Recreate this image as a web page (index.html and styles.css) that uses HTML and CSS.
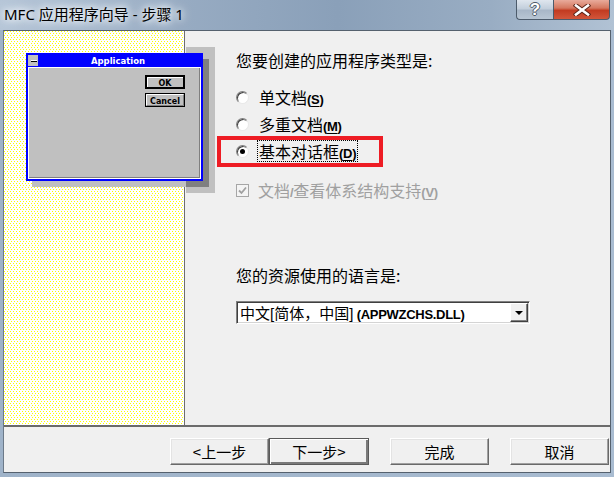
FILE: index.html
```html
<!DOCTYPE html>
<html lang="zh-CN">
<head>
    <meta charset="UTF-8">
    <title>MFC 应用程序向导 - 步骤 1</title>
    <link rel="stylesheet" href="styles.css">
</head>
<body>
    <div class="window">
        <div class="titlebar">
            <span class="title">MFC 应用程序向导 - 步骤 1</span>
            <div class="caption-btns">
                <span class="cap-btn help">?</span>
                <span class="cap-btn close">
                    <svg width="18" height="12" viewBox="0 0 18 12">
                        <path d="M3 1.5 L15 10.5 M15 1.5 L3 10.5" stroke="#5b2418" stroke-width="4.5" stroke-linecap="square"/>
                        <path d="M3 1.5 L15 10.5 M15 1.5 L3 10.5" stroke="#fff" stroke-width="2.6" stroke-linecap="square"/>
                    </svg>
                </span>
            </div>
        </div>

        <div class="client">
            <div class="main">
                <div class="preview">
                    <svg class="dots" width="180" height="394">
                        <defs>
                            <pattern id="dot" width="6" height="4" patternUnits="userSpaceOnUse">
                                <rect x="0" y="0" width="1" height="1" fill="#ffff00"/>
                                <rect x="3" y="0" width="1" height="1" fill="#ffff00"/>
                                <rect x="1" y="2" width="1" height="1" fill="#ffff00"/>
                                <rect x="4" y="2" width="1" height="1" fill="#ffff00"/>
                            </pattern>
                        </defs>
                        <rect width="180" height="394" fill="url(#dot)"/>
                    </svg>
                    <svg class="preview-art" width="200" height="152" viewBox="0 0 200 152">
                        <rect x="166" y="3" width="29" height="146" fill="#c0c0c0"/>
                        <rect x="12" y="137" width="154" height="6" fill="#c0c0c0"/>
                        <rect x="183" y="15" width="6" height="128" fill="#808080"/>
                        <rect x="166" y="137" width="23" height="6" fill="#808080"/>
                        <rect x="6" y="9" width="177" height="128" fill="#0000ff"/>
                        <rect x="8" y="23" width="173" height="112" fill="#fff"/>
                        <rect x="9" y="24" width="171" height="110" fill="#c0c0c0"/>
                        <path d="M9 133.5H180 M179.5 24V134" fill="none" stroke="#808080"/>
                        <rect x="8" y="11" width="10" height="11" fill="#c0c0c0"/>
                        <rect x="11" y="16" width="6" height="1" fill="#fff"/>
                        <rect x="11" y="17" width="6" height="1" fill="#000"/>
                        <text x="98" y="20" class="art-title">Application</text>
                        <rect x="126" y="32" width="38" height="12" fill="#c0c0c0" stroke="#000" stroke-width="2"/>
                        <path d="M127.5 43V33.5H163" fill="none" stroke="#fff"/>
                        <text x="145" y="42" class="art-btn">OK</text>
                        <rect x="125.5" y="49.5" width="39" height="13" fill="#c0c0c0" stroke="#000"/>
                        <path d="M126.5 62V50.5H164" fill="none" stroke="#fff"/>
                        <path d="M126.5 61.5H163.5V50.5" fill="none" stroke="#808080"/>
                        <text x="145" y="60" class="art-btn">Cancel</text>
                    </svg>
                </div>

                <div class="options">
                    <p class="prompt">您要创建的应用程序类型是:</p>
                    <div class="opt-row first">
                        <span class="radio"></span>
                        <span>单文档<span class="latin">(<u>S</u>)</span></span>
                    </div>
                    <div class="opt-row">
                        <span class="radio"></span>
                        <span>多重文档<span class="latin">(<u>M</u>)</span></span>
                    </div>
                    <div class="opt-row">
                        <span class="radio on"></span>
                        <span class="focused">基本对话框<span class="latin">(<u>D</u>)</span></span>
                    </div>
                    <div class="opt-row check disabled">
                        <svg class="checkbox" width="13" height="13" viewBox="0 0 13 13">
                            <rect x="0.5" y="0.5" width="12" height="12" fill="#f4f4f4" stroke="#a6a6a6"/>
                            <path d="M3 6.5 L5.5 9 L10 3.5" fill="none" stroke="#a0a0a0" stroke-width="1.8"/>
                        </svg>
                        <span>文档<span class="latin">/</span>查看体系结构支持<span class="latin">(<u>V</u>)</span></span>
                    </div>

                    <p class="prompt lang">您的资源使用的语言是:</p>
                    <div class="combo">
                        <span class="combo-text">中文<span class="bracket">[</span>简体，中国<span class="bracket">]</span> <span class="latin">(APPWZCHS.DLL)</span></span>
                        <span class="combo-btn">
                            <svg width="8" height="4" viewBox="0 0 8 4"><path d="M0 0H8L4 4Z" fill="#000"/></svg>
                        </span>
                    </div>

                    <div class="highlight"></div>
                </div>
            </div>

            <div class="separator"></div>

            <div class="footer">
                <button class="btn">&lt;上一步</button>
                <button class="btn default">下一步&gt;</button>
                <button class="btn spaced">完成</button>
                <button class="btn spaced">取消</button>
            </div>
        </div>
    </div>
</body>
</html>
```

FILE: styles.css
```css
body { margin: 0; background: #a8bbd0; font-family: "Noto Sans CJK SC", sans-serif; }
.window {
    width: 614px;
    height: 477px;
    display: flex;
    flex-direction: column;
    background: linear-gradient(to right, #9fb3c9, #a9bcd1);
}

/* caption */
.titlebar {
    height: 30px;
    display: flex;
    align-items: flex-start;
    padding: 0 4px;
    box-sizing: border-box;
    background: linear-gradient(to right, #b6c6d8 0%, #97abc2 30%, #8aa0b9 55%, #99adc3 80%, #b1c2d4 100%);
}
.title {
    font: 15px/28px "Noto Sans", "Noto Sans CJK SC", sans-serif;
    color: #000;
    text-shadow: 0 0 6px #fff, 0 0 10px #eef3f8, 0 0 14px #e3ebf3;
}
.caption-btns { margin-left: auto; display: flex; }
.cap-btn {
    height: 20px;
    box-sizing: border-box;
    border: 1px solid #4c5b6b;
    border-top: none;
    display: flex;
    align-items: center;
    justify-content: center;
}
.help {
    width: 37px;
    border-right: none;
    border-radius: 0 0 0 4px;
    background: linear-gradient(#dfe6ee, #c3cfdc 45%, #a8b7c8 55%, #b8c6d4);
    font: bold 17px "Liberation Sans", sans-serif;
    color: #fff;
    text-shadow: 1px 0 #4d5a68, -1px 0 #4d5a68, 0 1px #4d5a68, 0 -1px #4d5a68;
}
.close {
    width: 57px;
    border-radius: 0 0 4px 0;
    background: linear-gradient(#e9ab9b, #d57860 42%, #c23b21 55%, #d2563b);
}

/* client area */
.client {
    flex: 1;
    margin: 0 3px 4px 3px;
    border: 1px solid #55616e;
    border-left-color: #6c7a89;
    background: #f0f0f0;
    display: flex;
    flex-direction: column;
}
.main { height: 394px; display: flex; }
.preview {
    width: 180px;
    position: relative;
    border-right: 1px solid #6e6e6e;
    background: #fff;
}
.dots { display: block; }
.preview-art { position: absolute; left: 16px; top: 13px; overflow: visible; z-index: 1; }
.art-title { font: bold 8.5px "DejaVu Sans", sans-serif; fill: #fff; text-anchor: middle; }
.art-btn { font: bold 8px "DejaVu Sans", sans-serif; fill: #000; text-anchor: middle; }

.options {
    flex: 1;
    position: relative;
    padding: 19px 0 0 51px;
    font-size: 16px;
    line-height: 20px;
    color: #000;
}
.prompt { margin: 0; height: 20px; }
.latin { font: bold 13px "Liberation Sans", sans-serif; letter-spacing: -0.3px; }
.latin u { text-decoration-thickness: 1px; text-underline-offset: 2px; }

.opt-row { height: 20px; margin-top: 7px; display: flex; align-items: center; gap: 10px; }
.opt-row.first { margin-top: 17px; }
.opt-row.check { margin-top: 19px; gap: 9px; }
.opt-row.disabled { color: #a0a0a0; }

.radio {
    width: 13px;
    height: 13px;
    box-sizing: border-box;
    border-radius: 50%;
    border: 1px solid;
    border-color: #808080 #e8e8e8 #e8e8e8 #808080;
    background: #fff;
    box-shadow: inset 1px 1px #404040;
    position: relative;
}
.radio.on::after {
    content: "";
    position: absolute;
    left: 3px;
    top: 3px;
    width: 5px;
    height: 5px;
    border-radius: 50%;
    background: #000;
}
.focused { outline: 1px dotted #000; outline-offset: 0; padding: 0 1px; margin-left: -1px; }

.prompt.lang { margin-top: 65px; }
.combo {
    width: 294px;
    height: 23px;
    margin-top: 16px;
    box-sizing: border-box;
    border: 1px solid;
    border-color: #808080 #fff #fff #808080;
    box-shadow: inset 1px 1px #404040, inset -1px -1px #d4d4d4;
    background: #fff;
    display: flex;
    align-items: center;
    padding: 0 1px 0 3px;
    font-size: 15px;
}
.combo-text { flex: 1; white-space: nowrap; }
.bracket { font: 15px "Liberation Sans", sans-serif; }
.combo-btn {
    width: 18px;
    height: 19px;
    box-sizing: border-box;
    background: #f0f0f0;
    border: 1px solid;
    border-color: #fff #404040 #404040 #fff;
    box-shadow: inset -1px -1px #808080;
    display: flex;
    align-items: center;
    justify-content: center;
}

.highlight {
    position: absolute;
    left: 32px;
    top: 105px;
    width: 166px;
    height: 31px;
    box-sizing: border-box;
    border: 4px solid #ee1c24;
}

/* bottom buttons */
.separator { height: 2px; background: #6b6b6b; }
.footer {
    flex: 1;
    display: flex;
    justify-content: flex-end;
    align-items: flex-start;
    padding: 11px 1px 0 0;
}
.btn {
    width: 99px;
    height: 27px;
    margin: 0;
    padding: 0;
    font: 15px "Noto Sans CJK SC", sans-serif;
    color: #000;
    background: #f0f0f0;
    border: 1px solid;
    border-color: #fff #696969 #696969 #fff;
    box-shadow: inset -1px -1px #a0a0a0, inset 1px 1px #e3e3e3;
}
.btn.default {
    width: 100px;
    border-color: #5a5a5a;
    box-shadow: inset 1px 1px #fff, inset -2px -2px #7a7a7a;
}
.btn.spaced { margin-left: 21px; }
```
